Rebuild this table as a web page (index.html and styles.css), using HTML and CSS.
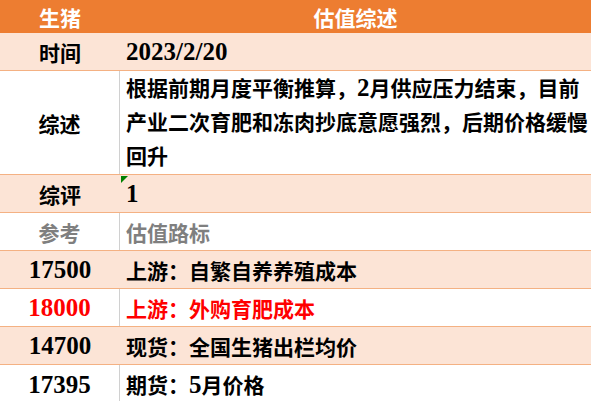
FILE: index.html
```html
<!DOCTYPE html>
<html lang="zh">
<head>
<meta charset="utf-8">
<link rel="stylesheet" href="styles.css">
</head>
<body>
<div class="sheet">
  <div class="row head">
    <div class="c1">生猪</div>
    <div class="c2 center">估值综述</div>
  </div>
  <div class="row peach h38">
    <div class="c1">时间</div>
    <div class="c2"><span class="num">2023/2/20</span></div>
  </div>
  <div class="row white tall">
    <div class="c1">综述</div>
    <div class="c2 multi">根据前期月度平衡推算，<span class="num">2</span>月供应压力结束，目前<br>产业二次育肥和冻肉抄底意愿强烈，后期价格缓慢<br>回升</div>
  </div>
  <div class="row peach h38">
    <div class="c1">综评</div>
    <div class="c2 flagged"><span class="num">1</span><span class="flag"></span></div>
  </div>
  <div class="row white h38 gray">
    <div class="c1">参考</div>
    <div class="c2">估值路标</div>
  </div>
  <div class="row peach h38">
    <div class="c1"><span class="num">17500</span></div>
    <div class="c2">上游：自繁自养养殖成本</div>
  </div>
  <div class="row white h38 red">
    <div class="c1"><span class="num">18000</span></div>
    <div class="c2">上游：外购育肥成本</div>
  </div>
  <div class="row peach h38">
    <div class="c1"><span class="num">14700</span></div>
    <div class="c2">现货：全国生猪出栏均价</div>
  </div>
  <div class="row white h38 last">
    <div class="c1"><span class="num">17395</span></div>
    <div class="c2">期货：<span class="num">5</span>月价格</div>
  </div>
</div>
</body>
</html>
```

FILE: styles.css
```css
html, body {
  margin: 0;
  padding: 0;
  background: #ffffff;
}
.sheet {
  width: 591px;
  height: 401px;
  overflow: hidden;
  font-family: "Liberation Serif", "Noto Sans CJK SC", serif;
  font-weight: bold;
  font-size: 21px;
  color: #000;
}
.num {
  font-size: 25px;
  line-height: 1;
}
.row {
  display: flex;
  box-sizing: border-box;
  border-bottom: 1px solid #f4b183;
}
.c1 {
  width: 120px;
  flex: none;
  display: flex;
  align-items: center;
  justify-content: center;
  box-sizing: border-box;
}
.c2 {
  flex: 1;
  display: flex;
  align-items: center;
  padding-left: 6px;
  position: relative;
}
.c2.center {
  justify-content: center;
  padding-left: 0;
}
.multi {
  display: block;
  line-height: 34px;
  padding-top: 1px;
}
.head {
  height: 33px;
  background: #ed7d31;
  color: #ffffff;
  border-bottom: none;
}
.h38 {
  height: 38px;
}
.tall {
  height: 104px;
}
.peach {
  background: #fce4d6;
}
.white {
  background: #ffffff;
}
.white .c1 {
  border-right: 1px solid #d0d0d0;
}
.gray {
  color: #7f7f7f;
}
.red {
  color: #ff0000;
}
.last {
  border-bottom: none;
}
.flag {
  position: absolute;
  left: 1px;
  top: 1px;
  width: 0;
  height: 0;
  border-top: 7px solid #008000;
  border-right: 7px solid transparent;
}
```
